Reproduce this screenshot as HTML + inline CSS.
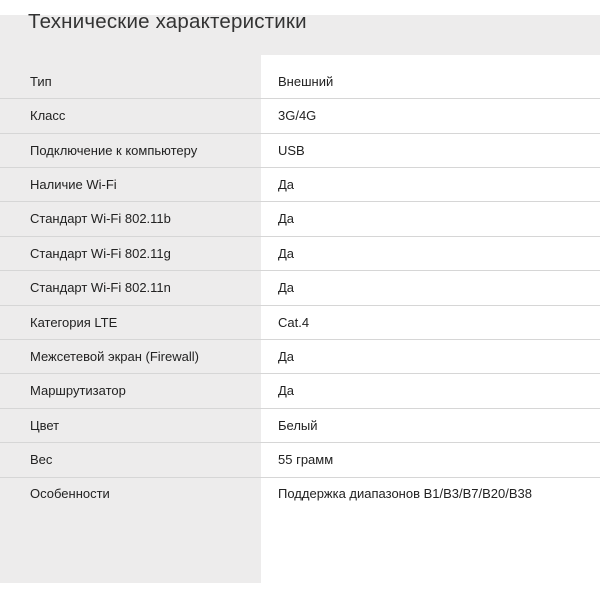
<!DOCTYPE html>
<html><head><meta charset="utf-8"><style>
html,body{margin:0;padding:0;background:#fff;width:600px;height:600px;overflow:hidden;font-family:"Liberation Sans","Noto Sans CJK SC",sans-serif;}
.band{position:absolute;left:0;top:15px;width:600px;height:40px;background:#edecec;}
.title{position:absolute;left:28px;top:10px;font-size:20.5px;color:#333;white-space:nowrap;letter-spacing:0.2px;}
.left{position:absolute;left:0;top:55px;width:261px;height:528px;background:#edecec;}
.line{position:absolute;left:0;width:600px;height:1px;background:#d6d6d6;}
.t{position:absolute;font-size:13px;color:#222;white-space:nowrap;line-height:16px;}
</style></head><body>
<div class="band"></div>
<div class="title">Технические характеристики</div>
<div class="left"></div>
<div class="line" style="top:98px"></div>
<div class="line" style="top:133px"></div>
<div class="line" style="top:167px"></div>
<div class="line" style="top:201px"></div>
<div class="line" style="top:236px"></div>
<div class="line" style="top:270px"></div>
<div class="line" style="top:305px"></div>
<div class="line" style="top:339px"></div>
<div class="line" style="top:373px"></div>
<div class="line" style="top:408px"></div>
<div class="line" style="top:442px"></div>
<div class="line" style="top:477px"></div>

<div class="t" style="left:30px;top:74px">Тип</div><div class="t" style="left:278px;top:74px">Внешний</div>
<div class="t" style="left:30px;top:108px">Класс</div><div class="t" style="left:278px;top:108px">3G/4G</div>
<div class="t" style="left:30px;top:143px">Подключение к компьютеру</div><div class="t" style="left:278px;top:143px">USB</div>
<div class="t" style="left:30px;top:177px">Наличие Wi-Fi</div><div class="t" style="left:278px;top:177px">Да</div>
<div class="t" style="left:30px;top:211px">Стандарт Wi-Fi 802.11b</div><div class="t" style="left:278px;top:211px">Да</div>
<div class="t" style="left:30px;top:246px">Стандарт Wi-Fi 802.11g</div><div class="t" style="left:278px;top:246px">Да</div>
<div class="t" style="left:30px;top:280px">Стандарт Wi-Fi 802.11n</div><div class="t" style="left:278px;top:280px">Да</div>
<div class="t" style="left:30px;top:315px">Категория LTE</div><div class="t" style="left:278px;top:315px">Cat.4</div>
<div class="t" style="left:30px;top:349px">Межсетевой экран (Firewall)</div><div class="t" style="left:278px;top:349px">Да</div>
<div class="t" style="left:30px;top:383px">Маршрутизатор</div><div class="t" style="left:278px;top:383px">Да</div>
<div class="t" style="left:30px;top:418px">Цвет</div><div class="t" style="left:278px;top:418px">Белый</div>
<div class="t" style="left:30px;top:452px">Вес</div><div class="t" style="left:278px;top:452px">55 грамм</div>
<div class="t" style="left:30px;top:486px">Особенности</div><div class="t" style="left:278px;top:486px">Поддержка диапазонов B1/B3/B7/B20/B38</div>
</body></html>
